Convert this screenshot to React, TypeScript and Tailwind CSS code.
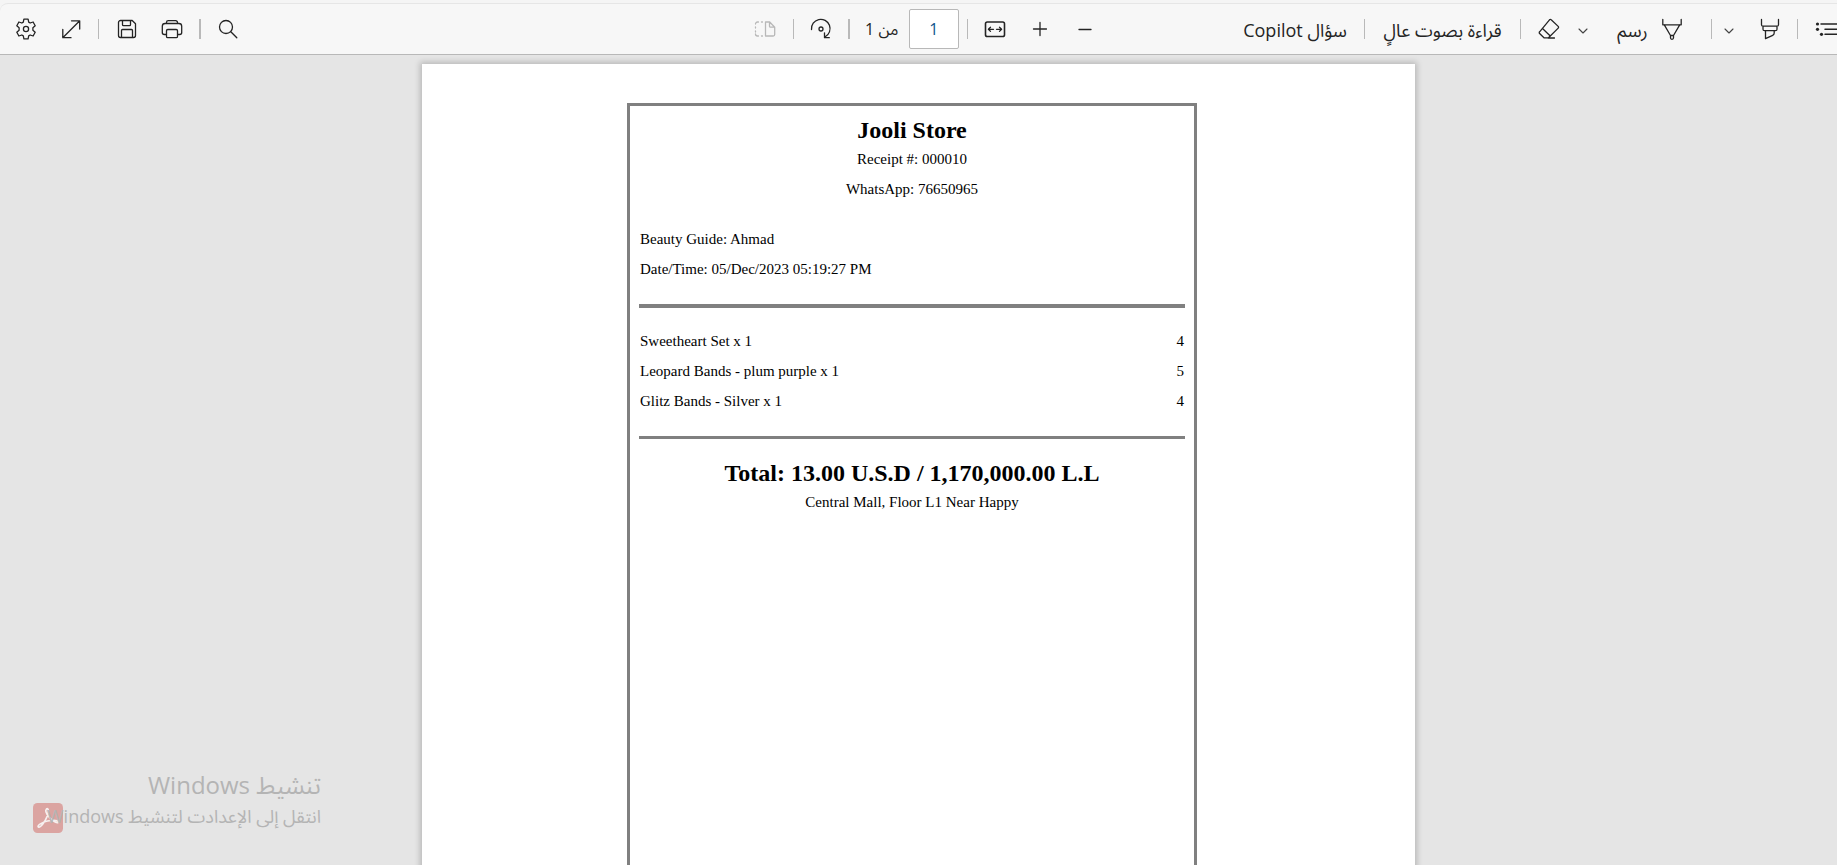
import type { ReactNode } from 'react';

function Icon({ children, size = 24 }: { children: ReactNode; size?: number }) {
  return (
    <svg
      width={size}
      height={size}
      viewBox={`0 0 ${size} ${size}`}
      fill="none"
      stroke="currentColor"
      strokeWidth="1.3"
      strokeLinecap="round"
      strokeLinejoin="round"
      aria-hidden="true"
    >
      {children}
    </svg>
  );
}

function IconButton({ label, children, muted }: { label: string; children: ReactNode; muted?: boolean }) {
  return (
    <button
      type="button"
      aria-label={label}
      disabled={muted}
      className={`flex h-10 w-[45px] shrink-0 items-center justify-center ${muted ? 'text-[#b8b8b8]' : 'text-[#242424]'}`}
    >
      {children}
    </button>
  );
}

function MenuButton({ label }: { label: string }) {
  return (
    <button type="button" aria-label={label} className="flex h-10 w-6 shrink-0 items-center justify-center pt-1 text-[#444444]">
      <Icon size={12}>
        <path d="M2 4l4 4 4-4" strokeWidth="1.1" />
      </Icon>
    </button>
  );
}

function Separator({ thick }: { thick?: boolean }) {
  return (
    <span className="flex w-[11px] shrink-0 justify-center">
      <span className={`h-5 bg-[#b9b9b9] ${thick ? 'w-0.5' : 'w-px'}`} />
    </span>
  );
}

function Toolbar() {
  return (
    <header className="shrink-0 border-b border-[#b8b8b8] bg-[#f5f5f5] pt-[3px]">
      <div className="flex items-center overflow-hidden rounded-tl-lg border-t border-[#e6e6e6] bg-[#f7f7f7] py-[5px] pl-[3px]">
        <div className="flex shrink-0 items-center">
          <IconButton label="الإعدادات">
            <Icon>
              <circle cx="12" cy="12" r="2.6" />
              <path d="M9.9 2.2h4.2l.6 2.9 1.5.9 2.9-1 2.1 3.7-2.3 2v2.6l2.3 2-2.1 3.7-2.9-1-1.5.9-.6 2.9H9.9l-.6-2.9-1.5-.9-2.9 1-2.1-3.7 2.3-2v-2.6l-2.3-2L4.900 5l2.9 1 1.500-.9z" />
            </Icon>
          </IconButton>
          <IconButton label="ملء الشاشة">
            <Icon>
              <path d="M4 20.500L20.500 4M12.500 3.800h8.200V12M3.800 12.500v8.200H12" />
            </Icon>
          </IconButton>
          <Separator />
          <IconButton label="حفظ">
            <Icon>
              <path d="M5.500 3.500h11.700l3.300 3.300v11.700a2 2 0 0 1-2 2h-13a2 2 0 0 1-2-2v-13a2 2 0 0 1 2-2zM7.500 3.700v4a1 1 0 0 0 1 1h6a1 1 0 0 0 1-1v-4M6.500 20.300v-6.800a1 1 0 0 1 1-1h9a1 1 0 0 1 1 1v6.800" />
            </Icon>
          </IconButton>
          <IconButton label="طباعة">
            <Icon>
              <path d="M6.500 6.500V5.500a1.800 1.800 0 0 1 1.800-1.800h7.400a1.800 1.800 0 0 1 1.800 1.800v1M6.300 17.500h-2a2 2 0 0 1-2-2V9.300a2.800 2.800 0 0 1 2.800-2.800h13.800a2.800 2.800 0 0 1 2.800 2.800v6.200a2 2 0 0 1-2 2h-2" />
              <rect x="6.500" y="12.500" width="11" height="8.200" rx="1.300" />
            </Icon>
          </IconButton>
          <Separator thick />
          <IconButton label="بحث">
            <Icon>
              <circle cx="10" cy="10" r="6.500" />
              <path d="M14.800 14.800l6 6" />
            </Icon>
          </IconButton>
        </div>

        <div className="grow-4" />

        <div className="flex shrink-0 items-center">
          <IconButton label="عرض الصفحة" muted>
            <Icon>
              <path d="M12.500 5h4.200l5 5.200v7.300a1.500 1.500 0 0 1-1.500 1.500h-7.700zM16.500 5.200v4a1 1 0 0 0 1 1h4M9.500 5h-1M5.500 5h-1a2 2 0 0 0-2 2M2.500 10v1M2.500 14v1M2.500 17a2 2 0 0 0 2 2h1M8.500 19h1" />
            </Icon>
          </IconButton>
          <Separator />
          <IconButton label="تدوير">
            <Icon>
              <path d="M2.500 12.500a9.300 9.300 0 1 1 13.700 7.300M15.500 15.800v4.900h4.800" />
              <circle cx="12" cy="12" r="2" />
            </Icon>
          </IconButton>
          <Separator thick />
          <label htmlFor="page-number" dir="rtl" className="w-[54px] shrink-0 text-center text-base">
            من 1
          </label>
          <input
            id="page-number"
            type="text"
            defaultValue="1"
            className="h-10 w-[50px] shrink-0 rounded-xs border border-[#b8b8b8] bg-white text-center text-base text-[#0f548c]"
          />
          <span className="ml-[3px] flex">
            <Separator />
          </span>
          <IconButton label="ملاءمة العرض">
            <Icon>
              <rect x="2.500" y="5" width="19" height="14.500" rx="1.800" strokeWidth="1.600" />
              <path d="M5.500 12.300h5M7.500 10.200l-2.100 2.100 2.100 2.100M18.500 12.300h-5M16.500 10.200l2.100 2.100-2.100 2.100" />
            </Icon>
          </IconButton>
          <IconButton label="تكبير">
            <Icon>
              <path d="M12 5.500v13M5.500 12h13" />
            </Icon>
          </IconButton>
          <IconButton label="تصغير">
            <Icon>
              <path d="M6 12.500h12" />
            </Icon>
          </IconButton>
        </div>

        <div className="grow" />

        <div className="flex shrink-0 items-center">
          <button type="button" dir="rtl" className="h-10 w-32 shrink-0 whitespace-nowrap pt-0.5 text-lg">
            سؤال Copilot
          </button>
          <Separator />
          <button type="button" dir="rtl" className="h-10 w-[145px] shrink-0 whitespace-nowrap pt-0.5 text-lg">
            قراءة بصوت عالٍ
          </button>
          <Separator />
          <IconButton label="مسح">
            <Icon>
              <path d="M14.200 2.800l7 6.600a1.200 1.200 0 0 1 0 1.700l-9.700 9.700H7L2.600 16.500a1.200 1.200 0 0 1 0-1.700L12.500 2.800a1.200 1.200 0 0 1 1.700 0zM5.500 11.500l7.800 7.500M11 21h6.500" />
            </Icon>
          </IconButton>
          <MenuButton label="خيارات الرسم" />
          <button type="button" dir="rtl" className="flex h-10 w-[111px] shrink-0 items-center justify-center gap-3 text-lg">
            <Icon>
              <path d="M2.800 2.500v5.300h18.400V2.500M4.300 7.800l6.200 10.700h3l6.200-10.700M10.500 18.500v2.300a1.500 1.500 0 0 0 3 0v-2.300" />
            </Icon>
            <span className="pt-0.5">رسم</span>
          </button>
          <Separator />
          <MenuButton label="خيارات التمييز" />
          <span className="flex pl-1.5">
            <IconButton label="تمييز">
              <Icon>
                <path d="M3.500 2.500v5.200a1.500 1.500 0 0 0 1.500 1.500h14a1.500 1.500 0 0 0 1.500-1.500V2.500M5 9.200v3a1.500 1.500 0 0 0 1.500 1.500h11a1.500 1.500 0 0 0 1.500-1.500v-3M7.500 13.700v8l7.200-3.400a2.500 2.500 0 0 0 1.500-2.300v-2.300" />
              </Icon>
            </IconButton>
          </span>
          <Separator />
          <span className="flex w-[34px] overflow-hidden">
            <IconButton label="المحتويات">
              <Icon>
                <path d="M7 7h16M11 12.300h12M11 17.300h12" strokeWidth="1.500" />
                <g fill="currentColor" stroke="none">
                  <circle cx="3.500" cy="7" r="1.600" />
                  <circle cx="3.500" cy="12.300" r="1.600" />
                  <circle cx="7.500" cy="17.300" r="1.600" />
                </g>
              </Icon>
            </IconButton>
          </span>
        </div>
      </div>
    </header>
  );
}

const items = [
  { name: 'Sweetheart Set x 1', price: 4 },
  { name: 'Leopard Bands - plum purple x 1', price: 5 },
  { name: 'Glitz Bands - Silver x 1', price: 4 },
];

function Receipt() {
  return (
    <article className="mr-[13px] min-h-[1000px] w-[570px] border-[3px] border-[#808080] px-[9px] pt-[10px] font-['Liberation_Serif',serif] text-[15px] leading-[30px] text-black">
      <header className="text-center">
        <h1 className="text-2xl leading-7 font-bold">Jooli Store</h1>
        <p>Receipt #: 000010</p>
        <p>WhatsApp: 76650965</p>
      </header>
      <section className="mt-5 px-px">
        <p>Beauty Guide: Ahmad</p>
        <p>Date/Time: 05/Dec/2023 05:19:27 PM</p>
      </section>
      <hr className="mt-5 border-0 border-t-4 border-[#808080]" />
      <table className="mt-[18px] w-full">
        <tbody>
          {items.map((item) => (
            <tr key={item.name}>
              <td className="pl-px">{item.name}</td>
              <td className="pr-px text-right">{item.price}</td>
            </tr>
          ))}
        </tbody>
      </table>
      <hr className="mt-5 border-0 border-t-[3px] border-[#808080]" />
      <footer className="mt-5 text-center">
        <h2 className="text-2xl leading-7 font-bold">Total: 13.00 U.S.D / 1,170,000.00 L.L</h2>
        <p>Central Mall, Floor L1 Near Happy</p>
      </footer>
    </article>
  );
}

function ActivationNotice() {
  return (
    <aside className="absolute bottom-8 left-[33px] w-72 text-[#b4b4b4]">
      <p dir="rtl" className="text-2xl leading-9">
        تنشيط Windows
      </p>
      <div className="flex items-center">
        <svg className="shrink-0" width="30" height="30" viewBox="0 0 30 30" aria-hidden="true">
          <rect width="30" height="30" rx="4.500" fill="#dba4a1" />
          <path
            d="M13.500 6c2-1.500 2.600 2.500.6 7.500S7.500 25 5.500 24c-2-1.300 4-5 9-6s10-1 10.500 1c.3 2-5-.5-8.500-4.500S12.300 7.200 13.500 6z"
            fill="none"
            stroke="#f6f0f0"
            strokeWidth="1.700"
          />
        </svg>
        <p dir="rtl" className="-ml-5 grow pb-1 text-lg leading-[26px] whitespace-nowrap">
          انتقل إلى الإعدادت لتنشيط Windows
        </p>
      </div>
    </aside>
  );
}

export default function App() {
  return (
    <div className="relative flex h-screen flex-col overflow-hidden bg-[#e5e5e5] font-['Open_Sans','Noto_Sans_Arabic','DejaVu_Sans',sans-serif] text-[#242424]">
      <Toolbar />
      <main className="flex min-h-0 grow justify-center overflow-hidden pt-[9px]">
        <div className="flex h-[1400px] w-[993px] shrink-0 justify-center bg-white pt-[39px] shadow-[0_0_6px_2px_rgba(0,0,0,0.2)]">
          <Receipt />
        </div>
      </main>
      <ActivationNotice />
    </div>
  );
}
